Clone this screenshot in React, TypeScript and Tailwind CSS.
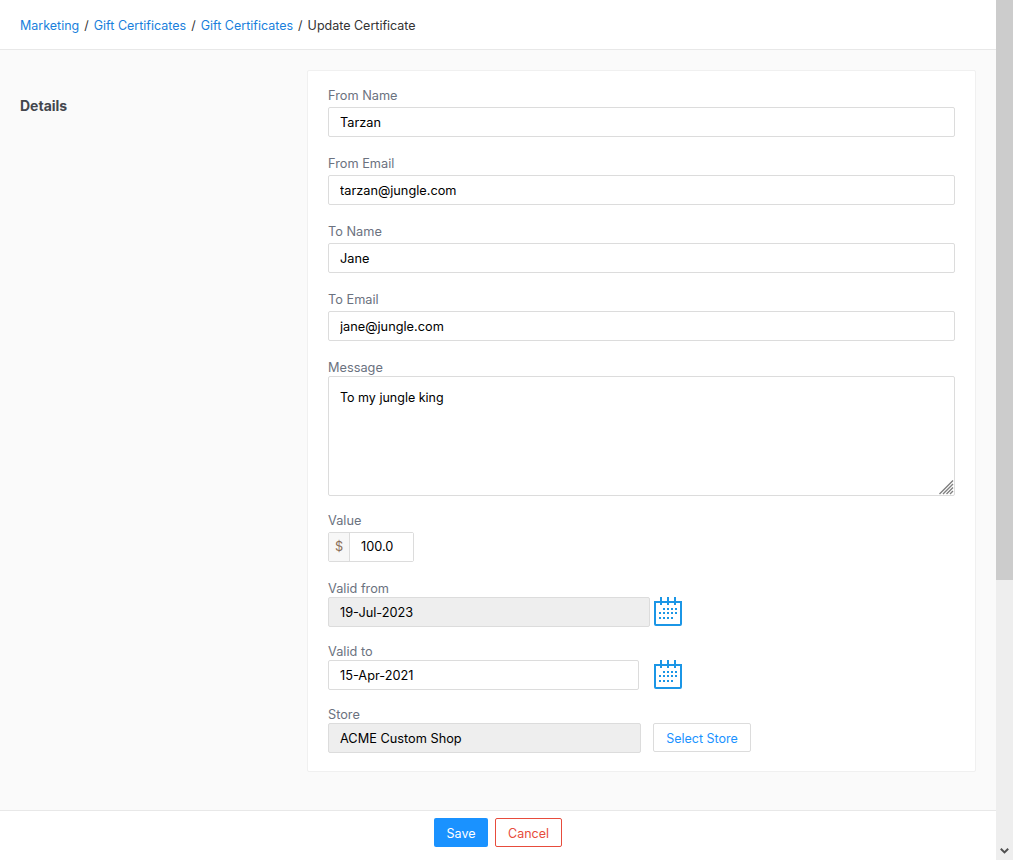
const inputBase =
  'block h-[30px] rounded-[2px] border border-[#dcdcdc] px-[11px] text-[12.75px] text-black outline-none'

function CalendarIcon() {
  const dots = [
    [9, 11], [13, 11], [17, 11], [21, 11],
    [5, 15], [9, 15], [13, 15], [17, 15], [21, 15],
    [5, 20], [9, 20], [13, 20], [17, 20],
  ]
  return (
    <svg width="28" height="29" viewBox="0 0 28 29" className="mt-[-2px] shrink-0 text-[#1b96e6]" fill="currentColor">
      <path d="M1 5h26v22a1 1 0 0 1-1 1H2a1 1 0 0 1-1-1z" fill="none" stroke="currentColor" strokeWidth="2" />
      <rect x="6" y="0" width="2" height="8" />
      <rect x="13" y="0" width="2" height="8" />
      <rect x="20" y="0" width="2" height="8" />
      {dots.map(([x, y]) => (
        <rect key={`${x}-${y}`} x={x} y={y} width="2" height="2" />
      ))}
    </svg>
  )
}

function Label({ children }: { children: string }) {
  return <label className="block h-[18px] text-[12.75px] leading-[20px] text-[#6b7280]">{children}</label>
}

function TextField({ label, value }: { label: string; value: string }) {
  return (
    <div className="mb-[17px]">
      <Label>{label}</Label>
      <input readOnly value={value} className={`${inputBase} mt-[3px] w-full bg-white`} />
    </div>
  )
}

export default function App() {
  return (
    <div className="flex h-[860px] overflow-hidden bg-white font-['Inter',sans-serif]">
      <div className="flex min-w-0 flex-1 flex-col">
        <nav className="flex h-[50px] shrink-0 items-center gap-[5px] border-b border-[#e8e8e8] px-5 pt-[3px] text-[12.5px] text-[#333333]">
          <a className="text-[#1a7fdc]">Marketing</a>
          <span>/</span>
          <a className="text-[#1a7fdc]">Gift Certificates</a>
          <span>/</span>
          <a className="text-[#1a7fdc]">Gift Certificates</a>
          <span>/</span>
          <span>Update Certificate</span>
        </nav>

        <main className="flex h-[760px] shrink-0 bg-[#fafafa] pt-5">
          <h2 className="w-[307px] shrink-0 pl-5 pt-[27px] text-[14px] font-bold leading-[18px] text-[#43464d]">Details</h2>
          <section className="h-[702px] w-[669px] rounded-[2px] border border-[#f0f0f0] bg-white px-5 pt-[15px]">
            <TextField label="From Name" value="Tarzan" />
            <TextField label="From Email" value="tarzan@jungle.com" />
            <TextField label="To Name" value="Jane" />
            <TextField label="To Email" value="jane@jungle.com" />

            <div className="mb-[15px]">
              <Label>Message</Label>
              <div className="relative">
                <textarea
                  readOnly
                  value="To my jungle king"
                  className="block h-[120px] w-full resize-none rounded-[2px] border border-[#dcdcdc] bg-white px-[11px] py-[11px] text-[12.5px] leading-[20px] text-black outline-none"
                />
                <svg width="15" height="15" viewBox="0 0 15 15" className="absolute bottom-[1px] right-[1px]" stroke="#808080" strokeWidth="1.4">
                  <path d="M0.5 14 14 0.5M4 14 14 4M7.5 14 14 7.5M11 14l3-3" />
                </svg>
              </div>
            </div>

            <div className="mb-[17px]">
              <Label>Value</Label>
              <div className="mt-[3px] flex h-[30px] w-[86px] rounded-[2px] border border-[#dcdcdc]">
                <span className="flex w-[21px] shrink-0 items-center justify-center border-r border-[#dcdcdc] bg-[#f7f7f7] text-[12.75px] text-[#8a6d57]">$</span>
                <input readOnly value="100.0" className="w-full min-w-0 bg-white pl-[11px] text-[12.75px] text-black outline-none" />
              </div>
            </div>

            <div className="mb-[15px]">
              <Label>Valid from</Label>
              <div className="flex items-center gap-1">
                <input readOnly value="19-Jul-2023" className={`${inputBase} w-[322px] bg-[#eeeeee]`} />
                <CalendarIcon />
              </div>
            </div>

            <div className="mb-[15px]">
              <Label>Valid to</Label>
              <div className="flex items-center gap-[15px]">
                <input readOnly value="15-Apr-2021" className={`${inputBase} w-[311px] bg-white`} />
                <CalendarIcon />
              </div>
            </div>

            <div>
              <Label>Store</Label>
              <div className="flex items-start gap-3">
                <input readOnly value="ACME Custom Shop" className={`${inputBase} w-[313px] bg-[#eeeeee]`} />
                <button className="h-[29px] w-[98px] rounded-[2px] border border-[#dcdcdc] bg-white pt-[3px] text-[12.5px] text-[#1a92ff]">Select Store</button>
              </div>
            </div>
          </section>
        </main>

        <footer className="flex flex-1 items-start justify-center gap-[7px] border-t border-[#e8e8e8] bg-white pt-[7px]">
          <button className="h-[29px] w-[54px] rounded-[2px] bg-[#1a92ff] pt-[3px] text-[12.5px] text-white">Save</button>
          <button className="h-[29px] w-[67px] rounded-[2px] border border-[#e74c3c] bg-white pt-[3px] text-[12.5px] text-[#e74c3c]">Cancel</button>
        </footer>
      </div>

      <div className="flex w-[17px] shrink-0 flex-col bg-[#eeeeee]">
        <div className="h-[580px] bg-[#cccccc]" />
        <div className="mt-auto flex h-[17px] items-center justify-center">
          <svg width="9" height="6" viewBox="0 0 9 6" className="mb-[2px]">
            <path d="M0.8 0.8 4.5 4.4 8.2 0.8" fill="none" stroke="#505050" strokeWidth="2" />
          </svg>
        </div>
      </div>
    </div>
  )
}
